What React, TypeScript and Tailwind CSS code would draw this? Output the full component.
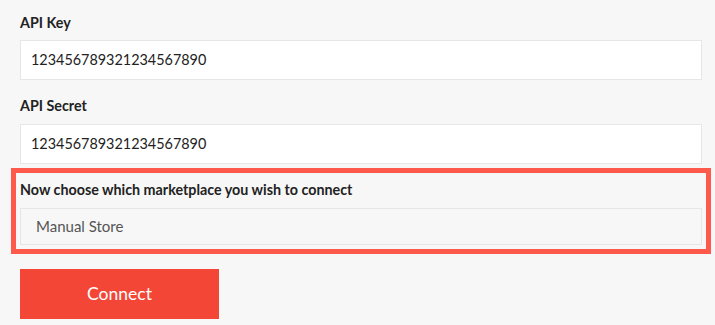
export default function App() {
  const font = { fontFamily: "Lato, 'Open Sans', sans-serif" };
  return (
    <div className="w-[715px] h-[325px] bg-[#f7f7f7] overflow-hidden pl-[20px] pr-[13px] pt-[13px]" style={font}>
      <div className="text-[14.3px] leading-[20px] font-bold text-[#222]">API Key</div>
      <div className="mt-[7px] h-[40px] border border-[#e6e6e6] bg-white pl-[10px] flex items-center text-[14.4px] text-[#222]">
        123456789321234567890
      </div>
      <div className="mt-[16px] text-[14.3px] leading-[20px] font-bold text-[#222]">API Secret</div>
      <div className="mt-[8px] h-[40px] border border-[#e6e6e6] bg-white pl-[10px] flex items-center text-[14.4px] text-[#222]">
        123456789321234567890
      </div>
      <div className="mt-[4px] -mx-[9px] border-[5px] border-[#fd5a4b] px-[4px] pt-[7px] pb-[4px]">
        <div className="text-[14.3px] leading-[20px] font-bold text-[#222]">Now choose which marketplace you wish to connect</div>
        <div className="mt-[8px] h-[37px] border border-[#e6e6e6] bg-[#f7f7f7] pl-[15px] flex items-center text-[15px] text-[#555]">
          Manual Store
        </div>
      </div>
      <div className="mt-[15px] w-[199px] h-[50px] bg-[#f44636] flex items-center justify-center text-white text-[17.5px]">
        Connect
      </div>
    </div>
  );
}
